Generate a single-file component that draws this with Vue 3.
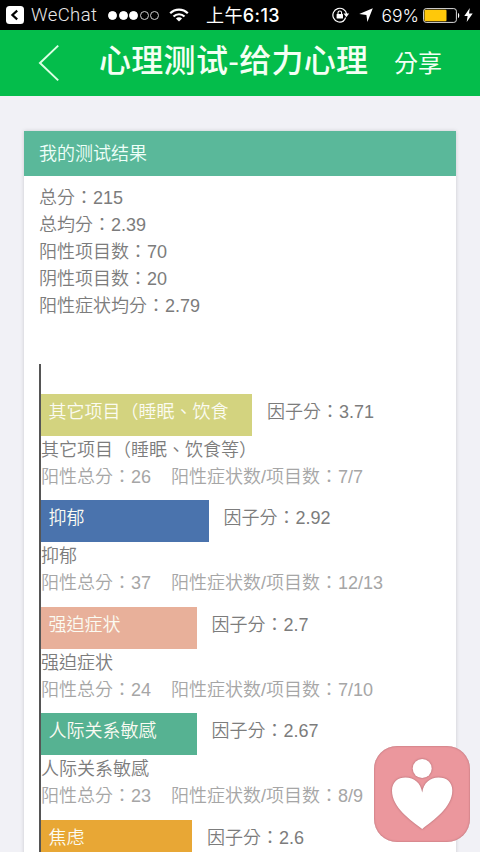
<template>
  <div class="page">
    <!-- 系统状态栏 -->
    <div class="status-bar">
      <div class="status-left">
        <svg class="icon-return" viewBox="0 0 18 18" width="18" height="18">
          <rect width="18" height="18" rx="3.5" fill="#fff" />
          <path d="M11.2 4.6 6.4 9l4.8 4.400" fill="none" stroke="#000" stroke-width="2.2" />
        </svg>
        <span class="app-name">WeChat</span>
        <div class="signal">
          <i v-for="n in 5" :key="n" class="dot" :class="{ 'dot--on': n <= 3 }"></i>
        </div>
        <svg class="icon-wifi" viewBox="0 0 20 14" width="20" height="14">
          <g fill="none" stroke="#fff" stroke-width="2.2">
            <path d="M1.2 5.2a12.4 12.4 0 0 1 17.6 0" />
            <path d="M4.5 8.5a7.8 7.8 0 0 1 11 0" />
          </g>
          <path d="M10 13.6 6.9 10.5a4.4 4.4 0 0 1 6.2 0z" fill="#fff" />
        </svg>
      </div>
      <div class="clock">上午<b>6:13</b></div>
      <div class="status-right">
        <svg viewBox="0 0 18 16" width="18" height="16">
          <path d="M11.500 14A6.900 6.900 0 1 1 14.600 7" fill="none" stroke="#fff" stroke-width="1.2" />
          <path d="M11.500 6.600h5.600l-2.800 3.700z" fill="#fff" />
          <path d="M13.600 10.500a6.900 6.900 0 0 1-2.600 3.700" fill="none" stroke="#fff" stroke-width="1.2" />
          <rect x="4.600" y="7" width="6.400" height="4.600" rx=".5" fill="#fff" />
          <path d="M6 7.400V5.800a1.800 1.800 0 0 1 3.600 0v1.600" fill="none" stroke="#fff" stroke-width="1.1" />
        </svg>
        <svg class="icon-location" viewBox="0 0 14 14" width="14" height="14">
          <path d="M13.800.2 8.400 14 7.400 6.900.2 6z" fill="#fff" />
        </svg>
        <span class="percent">69%</span>
        <svg class="icon-battery" viewBox="0 0 37 15" width="37" height="15">
          <rect x=".6" y=".6" width="32.8" height="13.8" rx="2.6" fill="none" stroke="#ddd" stroke-width="1" />
          <rect x="1.500" y="1.700" width="22" height="11.600" rx="1" fill="#ffc80a" />
          <path d="M35 5c1.7.6 1.7 4.4 0 5z" fill="#fff" />
        </svg>
        <svg class="icon-bolt" viewBox="0 0 9 14" width="9" height="14">
          <path d="M5.8 0 .3 8h3.3L2.700 14 8.700 5.600H5z" fill="#fff" />
        </svg>
      </div>
    </div>

    <!-- 导航栏 -->
    <header class="navbar">
      <svg class="icon-back" viewBox="0 0 22 38" width="22" height="38">
        <path d="M20.2 1.6 2 19l18.2 17.4" fill="none" stroke="#dcffe4" stroke-width="2" />
      </svg>
      <h1 class="title">心理测试-给力心理</h1>
      <span class="share">分享</span>
    </header>

    <main class="card">
      <div class="card-header">我的测试结果</div>
      <div class="summary">
        <p v-for="row in summary" :key="row.label">{{ row.label }}：{{ row.value }}</p>
      </div>

      <!-- 因子条形图 -->
      <div class="chart">
        <div v-for="item in factors" :key="item.name" class="factor">
          <div class="bar-row">
            <div class="bar" :style="{ width: item.width + 'px', backgroundColor: item.color }">
              {{ item.short || item.name }}
            </div>
            <span class="score">因子分：{{ item.score }}</span>
          </div>
          <template v-if="item.ratio">
            <div class="name">{{ item.name }}</div>
            <div class="detail">
              <span>阳性总分：{{ item.total }}</span>
              <span>阳性症状数/项目数：{{ item.ratio }}</span>
            </div>
          </template>
        </div>
      </div>
    </main>

    <!-- 悬浮按钮 -->
    <div class="float-btn">
      <svg viewBox="0 0 96 96" width="96" height="96">
        <g fill="#fff">
          <circle cx="48.2" cy="22.5" r="9.5" />
          <path d="M48.2 83C37 74.5 18 61.5 18 44.5 18 36 24 31.5 31.5 31.5c8.5 0 15.5 5.5 16.7 15 1.2-9.5 8-15 16.3-15C72.5 31.5 78.3 36 78.3 44.5 78.3 61.5 59 74.5 48.2 83z" />
        </g>
      </svg>
    </div>
  </div>
</template>

<script setup>
const summary = [
  { label: '总分', value: '215' },
  { label: '总均分', value: '2.39' },
  { label: '阳性项目数', value: '70' },
  { label: '阴性项目数', value: '20' },
  { label: '阳性症状均分', value: '2.79' }
]

// width 为条形宽度（px）
const factors = [
  { name: '其它项目（睡眠、饮食等）', short: '其它项目（睡眠、饮食', score: '3.71', total: 26, ratio: '7/7', width: 211, color: '#d3d37f' },
  { name: '抑郁', score: '2.92', total: 37, ratio: '12/13', width: 167.5, color: '#4a73ad' },
  { name: '强迫症状', score: '2.7', total: 24, ratio: '7/10', width: 155.5, color: '#e8b09a' },
  { name: '人际关系敏感', score: '2.67', total: 23, ratio: '8/9', width: 155.5, color: '#56b292' },
  { name: '焦虑', score: '2.6', width: 151, color: '#e8a735' }
]
</script>

<style>
body {
  margin: 0;
  overflow: hidden;
}
</style>

<style scoped>
.page {
  position: relative;
  width: 480px;
  height: 852px;
  overflow: hidden;
  display: flex;
  flex-direction: column;
  background: #f1f1f6;
  color: #7c7c7c;
  font-family: "Liberation Sans", "Noto Sans CJK TC", sans-serif;
  font-size: 18px;
  font-weight: 350;
  line-height: 27px;
}

/* ===== 状态栏 ===== */
.status-bar {
  flex: none;
  height: 30px;
  display: flex;
  align-items: center;
  background: #000;
  color: #fff;
  font-family: Inter, "Noto Sans CJK TC", sans-serif;
  font-weight: 400;
  white-space: nowrap;
}
.status-left {
  width: 206px;
  padding-left: 6px;
  box-sizing: border-box;
  display: flex;
  align-items: center;
}
.app-name {
  width: 66px;
  margin-left: 7px;
  color: #e8e8e8;
  font-family: Roboto, sans-serif;
  font-size: 18.5px;
  font-weight: 300;
  letter-spacing: 0.4px;
}
.signal {
  display: flex;
  gap: 1.6px;
  margin-left: 11px;
}
.dot {
  width: 9px;
  height: 9px;
  box-sizing: border-box;
  border: 1px solid #ccc;
  border-radius: 50%;
}
.dot--on {
  background: #fff;
  border-color: #fff;
}
.icon-wifi {
  margin-left: 10px;
}
.clock {
  width: 126px;
  font-size: 18px;
  letter-spacing: 0.4px;
}
.clock b {
  font-weight: 500;
}
.status-right {
  display: flex;
  align-items: center;
}
.icon-location {
  margin-left: 8.5px;
}
.percent {
  width: 37px;
  margin-left: 9px;
  font-size: 17.5px;
  font-weight: 300;
}
.icon-battery {
  margin-left: 4px;
}
.icon-bolt {
  margin-left: 4px;
}

/* ===== 导航栏 ===== */
.navbar {
  flex: none;
  height: 66px;
  display: flex;
  align-items: center;
  background: #04bd4b;
  color: #f4fff4;
  white-space: nowrap;
}
.icon-back {
  margin-left: 38px;
}
.title {
  width: 270px;
  margin: 0 0 4px 39px;
  font-size: 32px;
  font-weight: 500;
  line-height: 48px;
  letter-spacing: 0.3px;
}
.share {
  margin: 2px 0 0 25px;
  font-size: 24px;
  line-height: 36px;
  font-weight: 400;
}

/* ===== 结果卡片 ===== */
.card {
  flex: none;
  width: 432px;
  margin: 35px 24px 0;
  background: #fff;
  box-shadow: 0 0 4px rgba(0, 0, 0, 0.16);
}
.card-header {
  height: 45px;
  padding-left: 15px;
  background: #5ab89a;
  color: #effff9;
  line-height: 47px;
}
.summary {
  padding: 9px 15px 0;
}
.summary p {
  margin: 0;
}
.chart {
  margin: 44px 15px 0;
  padding-top: 29.5px;
  border-left: 2px solid #555;
}
.factor {
  height: 106.5px;
  white-space: nowrap;
}
.bar-row {
  display: flex;
  height: 42px;
  margin-bottom: 1px;
}
.bar {
  box-sizing: border-box;
  padding: 5px 0 0 7.5px;
  color: #fbfbf2;
  overflow: hidden;
}
.score {
  padding-top: 5px;
  margin-left: 15px;
}
.detail {
  display: flex;
  gap: 20px;
  color: #a6a6a6;
}

/* ===== 悬浮按钮 ===== */
.float-btn {
  position: absolute;
  left: 374px;
  top: 746px;
  width: 96px;
  height: 96px;
  border-radius: 23px;
  background: #eb979d;
  box-shadow: inset 0 0 2px #a9656c;
}
.float-btn g {
  filter: drop-shadow(0 0 1px #a9656c);
}
</style>
